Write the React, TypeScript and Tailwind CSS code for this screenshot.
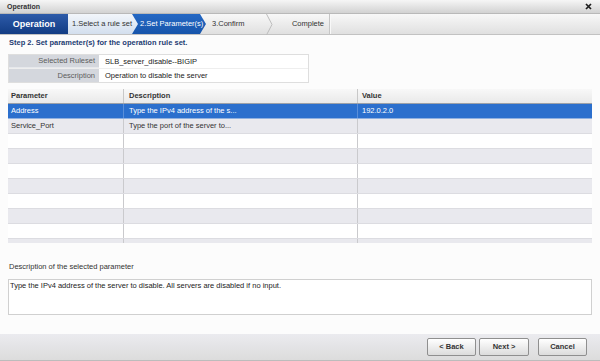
import React from "react"

type Row = { param: string; desc: string; value: string }

const rows: Row[] = [
	{ param: "Address", desc: "Type the IPv4 address of the s...", value: "192.0.2.0" },
	{ param: "Service_Port", desc: "Type the port of the server to...", value: "" },
	{ param: "", desc: "", value: "" },
	{ param: "", desc: "", value: "" },
	{ param: "", desc: "", value: "" },
	{ param: "", desc: "", value: "" },
	{ param: "", desc: "", value: "" },
	{ param: "", desc: "", value: "" },
	{ param: "", desc: "", value: "" },
	{ param: "", desc: "", value: "" },
]

function TitleBar() {
	return (
		<div className="h-[14px] flex items-center justify-between pl-[7px] pr-[8px] bg-gradient-to-b from-[#f6f6f6] to-[#d2d2d2] border-b border-[#b9b9b9]">
			<span className="font-bold text-[7px] text-[#333]">Operation</span>
			<svg width="7" height="7" viewBox="0 0 7 7">
				<path d="M1 1 L6 6 M6 1 L1 6" stroke="#1e1e1e" strokeWidth="1.7" />
			</svg>
		</div>
	)
}

function Steps() {
	return (
		<div className="flex h-[21px] bg-gradient-to-b from-[#f8f8f8] to-[#e0e0e0] border-b border-[#c2c2c2]">
			<div className="w-[68px] flex items-center justify-center bg-gradient-to-b from-[#2d5ba9] to-[#123c84] text-white font-bold text-[9px]">
				Operation
			</div>
			<div className="relative z-20 w-[70px] pl-[4px] flex items-center text-[#333] bg-gradient-to-b from-[#f2f6fb] to-[#d3dfee] [clip-path:polygon(0_0,calc(100%_-_6px)_0,100%_50%,calc(100%_-_6px)_100%,0_100%)]">
				1.Select a rule set
			</div>
			<div className="relative z-10 -ml-[6px] w-[74px] pl-[8px] flex items-center text-white bg-gradient-to-b from-[#2468c4] to-[#1755ab] [clip-path:polygon(0_0,calc(100%_-_6px)_0,100%_50%,calc(100%_-_6px)_100%,0_100%)]">
				2.Set Parameter(s)
			</div>
			<div className="w-[60px] pl-[6px] flex items-center text-[#333]">3.Confirm</div>
			<svg width="7" height="21" viewBox="0 0 7 21" className="shrink-0">
				<path d="M0.5 0 L6 10.5 L0.5 21" fill="none" stroke="#bdbdbd" strokeWidth="1" />
			</svg>
			<div className="w-[57px] pr-[5px] flex items-center justify-end text-[#333] border-r border-[#c6c6c6]">
				Complete
			</div>
			<div className="flex-1 border-l border-[#f8f8f8]" />
		</div>
	)
}

function RulesetInfo() {
	return (
		<div className="mt-[6px] w-[301px] border border-[#dedede] bg-white">
			<div className="flex h-[14px] border-b border-[#eeeeee]">
				<div className="w-[90px] pr-[4px] flex items-center justify-end bg-[#d4d7dd] text-[#5c5c5c] border-b border-[#e6e8ec]">
					Selected Ruleset
				</div>
				<div className="flex-1 pl-[6px] flex items-center text-[#222]">SLB_server_disable--BIGIP</div>
			</div>
			<div className="flex h-[13px]">
				<div className="w-[90px] pr-[4px] flex items-center justify-end bg-[#d4d7dd] text-[#5c5c5c]">
					Description
				</div>
				<div className="flex-1 pl-[6px] flex items-center text-[#222]">Operation to disable the server</div>
			</div>
		</div>
	)
}

function ParamGrid() {
	return (
		<div className="mt-[6px] h-[154px] overflow-hidden">
			<div className="flex h-[15px] bg-gradient-to-b from-[#f8f8f8] to-[#e9e9e9] border-b border-[#9ba0a8] font-bold text-[#333]">
				<div className="w-[116px] pl-[3px] flex items-center border-r border-[#c8c8c8]">Parameter</div>
				<div className="w-[234px] pl-[5px] flex items-center border-r border-[#c8c8c8]">Description</div>
				<div className="w-[234px] pl-[4px] flex items-center">Value</div>
			</div>
			{rows.map((r, i) => {
				const selected = i === 0
				const bg = selected ? "bg-[#2b6fcd] text-white" : i % 2 === 1 ? "bg-[#e9e9ee] text-[#333]" : "bg-white text-[#333]"
				const line = selected ? "border-[#5b8fd9]" : "border-[#cacacd]"
				return (
					<div key={i} className={`flex h-[15px] border-b ${selected ? "border-[#8fb0e0]" : "border-[#dcdce1]"} ${bg}`}>
						<div className={`w-[116px] pl-[3px] flex items-center border-r ${line}`}>{r.param}</div>
						<div className={`w-[234px] pl-[5px] flex items-center border-r ${line}`}>{r.desc}</div>
						<div className="w-[234px] pl-[4px] flex items-center">{r.value}</div>
					</div>
				)
			})}
		</div>
	)
}

function Footer() {
	const btn =
		"h-[18px] rounded-[2px] border border-[#8f8f8f] bg-gradient-to-b from-white to-[#dcdcdc] font-bold text-[7.5px] text-[#333] flex items-center justify-center"
	return (
		<div className="h-[27px] flex items-start justify-end pt-[4px] pr-[13px] bg-gradient-to-b from-[#ebebef] to-[#dcdcdc] border-b border-[#bcbcbc]">
			<button className={`${btn} w-[49px]`}>&lt; Back</button>
			<button className={`${btn} w-[50px] ml-[3px]`}>Next &gt;</button>
			<button className={`${btn} w-[49px] ml-[9px]`}>Cancel</button>
		</div>
	)
}

export default function App() {
	return (
		<div className="w-[600px] h-[361px] flex flex-col overflow-hidden bg-[#fcfcfc] text-[7.5px] leading-[10px] text-[#333] font-['Liberation_Sans',Arial,sans-serif]">
			<TitleBar />
			<Steps />
			<div className="flex-1 flex flex-col px-[8px]">
				<div className="pt-[3px] pl-[1px] h-[13px] font-bold text-[#1c3b72]">
					Step 2. Set parameter(s) for the operation rule set.
				</div>
				<RulesetInfo />
				<ParamGrid />
				<div className="mt-[19px] pl-[1px] text-[#333]">Description of the selected parameter</div>
				<div className="mt-[7px] h-[36px] border border-[#d0d0d0] bg-white pl-[1px] pt-[1px] text-[#222]">
					Type the IPv4 address of the server to disable. All servers are disabled if no input.
				</div>
			</div>
			<Footer />
		</div>
	)
}
